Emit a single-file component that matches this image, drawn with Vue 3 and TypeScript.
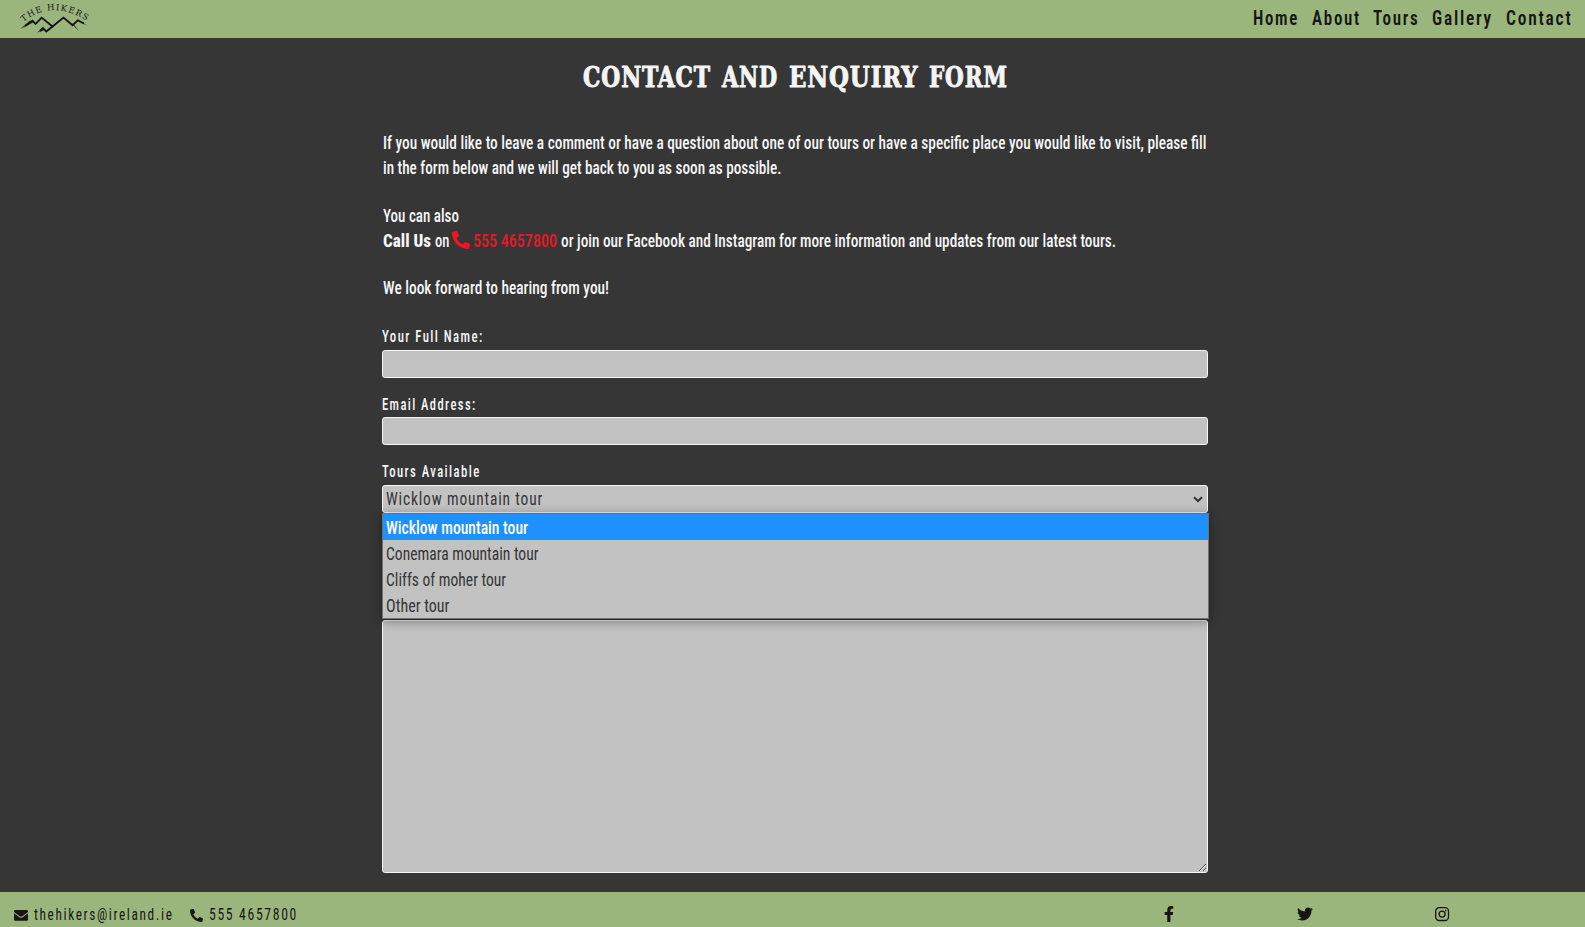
<script setup lang="ts">
import { defineComponent, h, ref } from 'vue'

interface LineProps { t: string; w: number; ht: number; base: number }

// A single line of condensed type, set to an exact measure.
const Line = defineComponent({
  props: {
    t: { type: String, required: true },
    w: { type: Number, required: true },
    ht: { type: Number, default: 24 },
    base: { type: Number, default: 17.6 },
  },
  setup(props: LineProps) {
    return () =>
      h('svg', { width: props.w, height: props.ht, overflow: 'visible' }, [
        h('text', {
          x: 0, y: props.base, fill: 'currentColor',
          textLength: props.w, lengthAdjust: 'spacingAndGlyphs',
        }, props.t),
      ])
  },
})

const phonePath = 'M493.4 24.6l-104-24c-11.300-2.600-22.900 3.300-27.500 13.900l-48 112c-4.200 9.800-1.400 21.300 6.900 28l60.600 49.600c-36 76.700-98.900 140.500-177.200 177.200l-49.600-60.600c-6.800-8.300-18.200-11.100-28-6.900l-112 48C3.900 366.500-2 378.100.6 389.400l24 104C27.100 504.200 36.700 512 48 512c256.100 0 464-207.500 464-464 0-11.200-7.700-20.900-18.600-23.400z'

const nav = [
  { t: 'Home', w: 46 }, { t: 'About', w: 49 }, { t: 'Tours', w: 46.5 },
  { t: 'Gallery', w: 61 }, { t: 'Contact', w: 66.5 },
]
const title = [
  { t: 'CONTACT', w: 128 }, { t: 'AND', w: 56 }, { t: 'ENQUIRY', w: 129.5 }, { t: 'FORM', w: 79 },
]
const tours = [
  { t: 'Wicklow mountain tour', w: 142 }, { t: 'Conemara mountain tour', w: 152.5 },
  { t: 'Cliffs of moher tour', w: 120 }, { t: 'Other tour', w: 63.5 },
]
const selected = ref(0)
</script>

<template>
  <div class="page">
    <header class="bar top">
      <svg class="logo" width="76" height="36" viewBox="0 0 76 36">
        <defs><path id="arc" d="M7.500 22 Q36 -1.500 73 22" /></defs>
        <text class="logo-text"><textPath href="#arc" textLength="68" lengthAdjust="spacing">THE HIKERS</textPath></text>
        <path class="ridge" d="M9 26 16.500 20.700 19.500 24 25.700 17.600 36.500 26.500 47.500 17.600 56.500 25.300 61.800 20.300 68 23.500" />
        <path class="ridge" d="M24 31 27 28 30.300 31.500 36.500 26.500" />
        <path class="tail" d="M4.500 28.500 14 20.500 18 22 9 27zM21 32.500 26 28 30 30zM55 23 63 31.500 58 24zM62 19.500 72 26 63 22z" />
      </svg>
      <nav class="nav">
        <Line v-for="n in nav" :key="n.t" class="nav-t" :t="n.t" :w="n.w" :ht="37" :base="24.700" />
      </nav>
    </header>

    <main class="main">
      <h1 class="title">
        <Line v-for="n in title" :key="n.t" class="title-t" :t="n.t" :w="n.w" :ht="34" :base="27.400" />
      </h1>

      <section class="intro">
        <div class="row"><Line class="body-t" t="If you would like to leave a comment or have a question about one of our tours or have a specific place you would like to visit, please fill" :w="823.500" /></div>
        <div class="row"><Line class="body-t" t="in the form below and we will get back to you as soon as possible." :w="398.500" /></div>
        <div class="row para"><Line class="body-t" t="You can also" :w="76" /></div>
        <div class="row call">
          <Line class="body-t strong" t="Call Us" :w="48" />
          <Line class="body-t on" t="on" :w="14.500" />
          <svg class="phone" width="18" height="18" viewBox="0 0 512 512"><path :d="phonePath" transform="matrix(-1 0 0 1 512 0)" /></svg>
          <Line class="body-t number" t="555 4657800" :w="84" />
          <Line class="body-t" t="or join our Facebook and Instagram for more information and updates from our latest tours." :w="555" />
        </div>
        <div class="row last"><Line class="body-t" t="We look forward to hearing from you!" :w="226" /></div>
      </section>

      <form class="form" @submit.prevent>
        <div class="field">
          <Line class="label-t" t="Your Full Name:" :w="101.700" :ht="24" :base="15.700" />
          <input class="control" type="text" />
        </div>
        <div class="field">
          <Line class="label-t" t="Email Address:" :w="94.700" :ht="23" :base="15.700" />
          <input class="control" type="email" />
        </div>
        <div class="field">
          <Line class="label-t" t="Tours Available" :w="98.700" :ht="24" :base="15.700" />
          <div class="control select">
            <Line class="select-t" :t="tours[selected].t" :w="157" :ht="26" :base="19.300" />
            <svg class="chevron" width="10" height="7" viewBox="0 0 10 7"><path d="M1 1.200 5 5 9 1.200" /></svg>
            <ul class="menu">
              <li v-for="(o, i) in tours" :key="o.t" :class="['option', { active: i === selected }]" @click="selected = i">
                <Line class="option-t" :t="o.t" :w="o.w" :ht="26" :base="19.700" />
              </li>
            </ul>
          </div>
        </div>
        <textarea class="control message"></textarea>
      </form>
    </main>

    <footer class="bar foot">
      <div class="contact">
        <svg class="mail" width="14" height="11" viewBox="0 0 14 11"><path d="M1.300 0h11.400Q14 0 14 1.300v.6L8.300 6.200q-1.300.9-2.600 0L0 1.900v-.6Q0 0 1.300 0zM0 3.300l5.300 3.900q1.700 1.200 3.400 0L14 3.300v6.200q0 1.300-1.300 1.300H1.300Q0 10.800 0 9.500z" /></svg>
        <Line class="foot-t" t="thehikers@ireland.ie" :w="139.500" :ht="24" :base="16.600" />
        <svg class="tel" width="13" height="13" viewBox="0 0 512 512"><path :d="phonePath" transform="matrix(-1 0 0 1 512 0)" /></svg>
        <Line class="foot-t" t="555 4657800" :w="89" :ht="24" :base="16.600" />
      </div>
      <div class="social">
        <svg width="16" height="16" viewBox="0 0 320 512"><path d="M279.140 288l14.220-92.660h-88.910v-60.130c0-25.350 12.420-50.060 52.240-50.060h40.420V6.260S260.430 0 225.360 0c-73.220 0-121.080 44.380-121.080 124.720v70.620H22.890V288h81.390v224h100.170V288z" /></svg>
        <svg width="16" height="16" viewBox="0 0 512 512"><path d="M459.370 151.716c.325 4.548.325 9.097.325 13.645 0 138.720-105.583 298.558-298.558 298.558-59.452 0-114.680-17.219-161.137-47.106 8.447.974 16.568 1.299 25.340 1.299 49.055 0 94.213-16.568 130.274-44.832-46.132-.975-84.792-31.188-98.112-72.772 6.498.974 12.995 1.624 19.818 1.624 9.421 0 18.843-1.300 27.614-3.573-48.081-9.747-84.143-51.980-84.143-102.985v-1.299c13.969 7.797 30.214 12.670 47.431 13.319-28.264-18.843-46.781-51.005-46.781-87.391 0-19.492 5.197-37.360 14.294-52.954 51.655 63.675 129.300 105.258 216.365 109.807-1.624-7.797-2.599-15.918-2.599-24.040 0-57.828 46.782-104.934 104.934-104.934 30.213 0 57.502 12.670 76.670 33.137 23.715-4.548 46.456-13.320 66.599-25.340-7.798 24.366-24.366 44.833-46.132 57.827 21.117-2.273 41.584-8.122 60.426-16.243-14.292 20.791-32.161 39.308-52.628 54.253z" /></svg>
        <svg class="insta" width="16" height="16" viewBox="0 0 16 16"><rect x="1.700" y="1.700" width="12.800" height="12.800" rx="3.500" /><circle cx="8.100" cy="8.100" r="3" /><circle class="dot" cx="11.800" cy="4.500" r=".85" /></svg>
      </div>
    </footer>
  </div>
</template>

<style>
html, body { margin: 0; background: #363636; overflow: hidden; }
</style>

<style scoped>
.page {
  height: 927px; display: flex; flex-direction: column; box-sizing: border-box;
  background: #363636; color: #f5f5f5; overflow: hidden;
  font-family: Roboto, "Liberation Sans", sans-serif;
}
svg { display: block; flex: none; }
.bar { background: #9bb67c; color: #161616; display: flex; justify-content: space-between; flex: none; }
.top { height: 38px; }
.logo { margin-left: 16px; }
.logo-text { font: 8.500px "DejaVu Serif", serif; fill: #161616; }
.ridge { fill: none; stroke: #111; stroke-width: 1.800; }
.tail { fill: #111; opacity: .65; }
.nav { display: flex; gap: 12.500px; padding-right: 13px; }
.nav-t { font-size: 19.500px; font-weight: 600; font-stretch: 75%; letter-spacing: 2px; }

.main { flex: 1; width: 827px; margin-left: 382px; }
.title { display: flex; gap: 11px; margin: 22px 0 0 200.500px; }
.title-t {
  font: bold 28px "DejaVu Serif", serif; font-stretch: condensed; letter-spacing: 1px;
  stroke: #f5f5f5; stroke-width: .9px; stroke-linejoin: round;
}
.intro { padding: 37px 0 0 .6px; }
.row { display: flex; height: 25px; }
.para { margin-top: 23px; }
.last { margin-top: 22px; }
.body-t { font-size: 18.300px; font-weight: 500; font-stretch: 75%; }
.strong { font-weight: 800; }
.on { margin-left: 4px; }
.phone { margin: 2px 3px 0 3px; fill: #f01424; }
.number { color: #e81826; margin-right: 4px; font-weight: 500; }

.form { padding-top: 25px; }
.field { margin-bottom: 16px; }
.label-t { font-size: 16px; font-weight: 500; font-stretch: 75%; letter-spacing: 1.800px; margin-left: -.3px; }
.control {
  display: block; box-sizing: border-box; width: 826px; height: 28px; padding: 0; margin: 0;
  background: #c2c2c2; border: 1px solid #f5f5f5; border-radius: 3px; color: #363636;
}
.select { position: relative; display: flex; justify-content: space-between; padding: 0 4px 0 3.300px; }
.select-t { font-size: 18.300px; font-weight: 400; font-stretch: 75%; letter-spacing: 1px; }
.chevron { margin-top: 10px; fill: none; stroke: #333; stroke-width: 2; }
.menu {
  position: absolute; left: -1px; top: 27px; width: 827px; height: 106px; box-sizing: border-box;
  margin: 0; padding: 0; list-style: none; background: #c2c2c2; border: 1px solid #707070;
  box-shadow: 0 2px 10px rgba(0, 0, 0, .4); z-index: 2;
}
.option { height: 26px; padding-left: 3.400px; color: #363636; }
.option.active { background: #1e90ff; color: #fff; }
.option-t { font-size: 18.300px; font-weight: 400; font-stretch: 75%; }
.active .option-t { font-weight: 500; }
.message { height: 253px; margin-top: 107px; resize: both; }

.foot { height: 35px; }
.contact { display: flex; padding: 11px 0 0 14px; }
.mail { margin: 7px 6px 0 0; }
.tel { margin: 6px 6px 0 16px; }
.foot-t { font-size: 16.500px; font-weight: 400; font-stretch: 75%; letter-spacing: 2px; }
.foot svg { fill: #161616; }
.social { display: flex; gap: 120.500px; padding: 14px 135.500px 0 0; }
.social .insta { fill: none; stroke: #161616; stroke-width: 1.300; }
.social .dot { fill: #161616; stroke: none; }
</style>
